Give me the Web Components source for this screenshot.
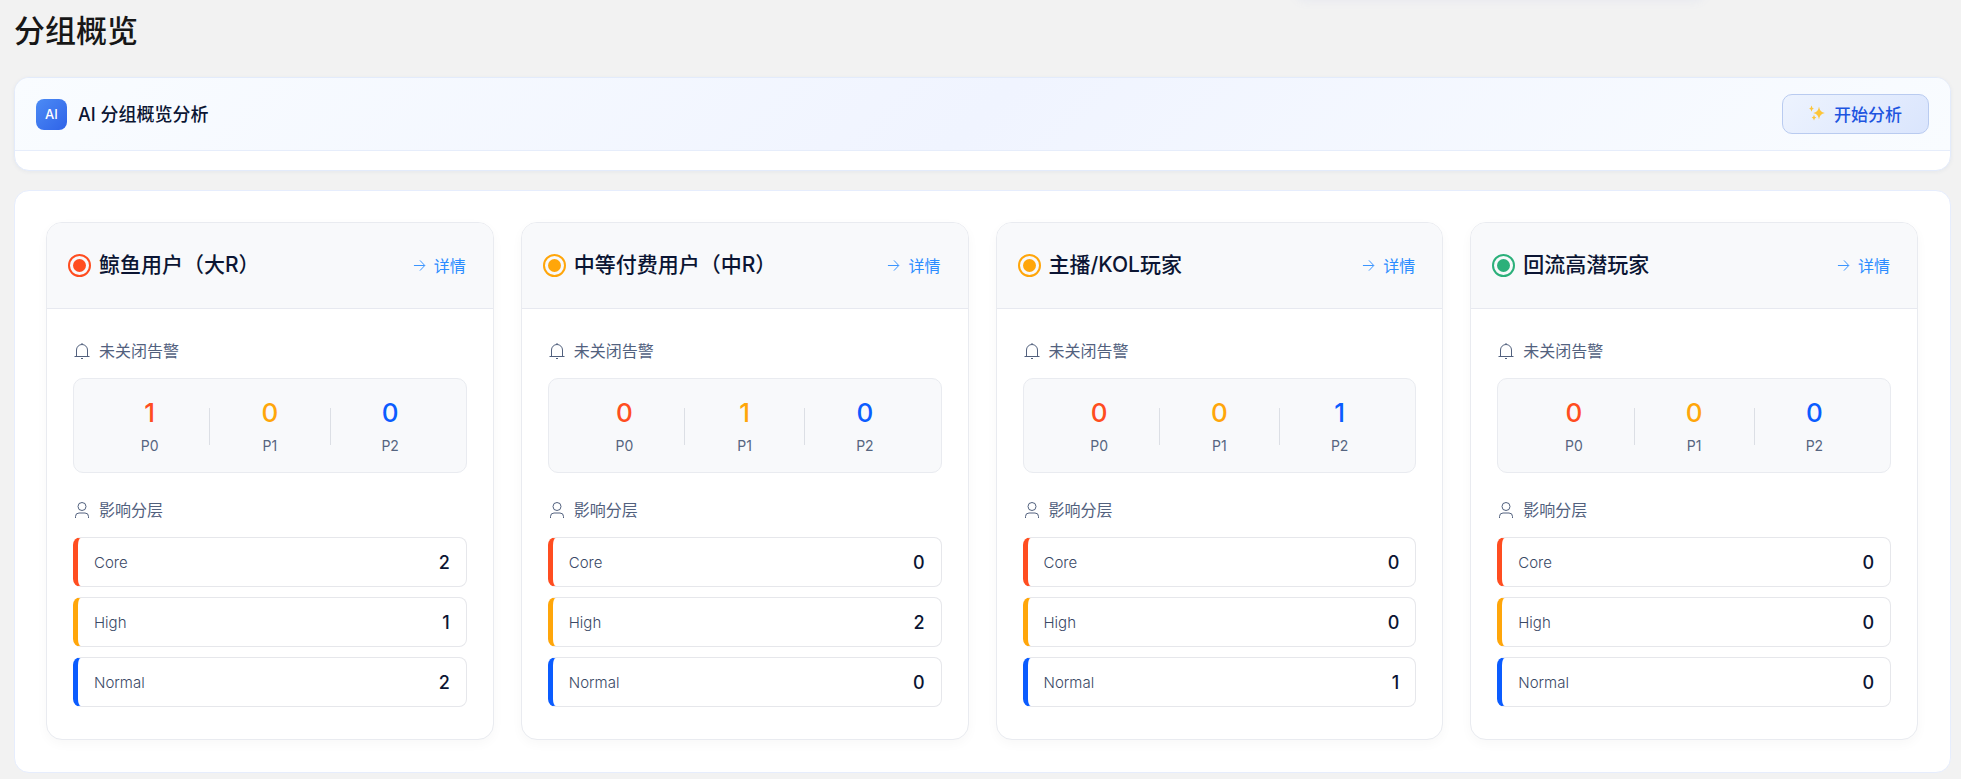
<!DOCTYPE html>
<html lang="zh-CN">
<head>
<meta charset="utf-8">
<meta name="viewport" content="width=device-width, initial-scale=1">
<title>分组概览</title>
<style>
  body {
    margin: 0;
    background: #f2f2f2;
    color: #0b1533;
    font-family: Inter, "Noto Sans CJK SC", sans-serif;
  }
</style>
</head>
<body>
<group-overview-page heading="分组概览">
  <ai-panel heading="AI 分组概览分析">开始分析</ai-panel>
  <group-board>
    <group-card level="p0" p0="1" p1="0" p2="0" core="2" high="1" normal="2">鲸鱼用户（大R）</group-card>
    <group-card level="p1" p0="0" p1="1" p2="0" core="0" high="2" normal="0">中等付费用户（中R）</group-card>
    <group-card level="p1" p0="0" p1="0" p2="1" core="0" high="0" normal="1">主播/KOL玩家</group-card>
    <group-card level="ok" p0="0" p1="0" p2="0" core="0" high="0" normal="0">回流高潜玩家</group-card>
  </group-board>
</group-overview-page>

<script>
// page shell
class GroupOverviewPage extends HTMLElement {
  constructor() {
    super();
    this.attachShadow({ mode: 'open' });
    this.shadowRoot.innerHTML = `
      <style>
        :host {
          display: block;
          padding: 9px 10px 6px 14px;
        }
        /* shadow of the floating bar that sits above the viewport */
        .bar-shadow {
          position: absolute;
          top: -40px;
          left: 66%;
          right: 13%;
          height: 40px;
          border-radius: 12px;
          box-shadow: 0 2px 8px #e9eaf0;
        }
        h1 {
          margin: 0 0 24px;
          color: #171717;
          font-size: 31px;
          line-height: 44px;
          font-weight: 500;
        }
        main {
          display: flex;
          flex-direction: column;
          gap: 19px;
        }
      </style>
      <div class="bar-shadow"></div>
      <h1></h1>
      <main><slot></slot></main>
    `;
    this.shadowRoot.querySelector('h1').textContent = this.getAttribute('heading');
  }
}

// AI analysis panel with the start button
class AiPanel extends HTMLElement {
  constructor() {
    super();
    this.attachShadow({ mode: 'open' });
    this.shadowRoot.innerHTML = `
      <style>
        :host {
          display: block;
          overflow: hidden;
          padding-bottom: 19px;
          border: 1px solid #e3ebfb;
          border-radius: 15px;
          background: #fff;
          box-shadow: 0 1px 4px rgba(30, 60, 120, 0.06);
        }
        header {
          display: flex;
          align-items: center;
          gap: 11px;
          padding: 16px 21px;
          border-bottom: 1px solid #e6edfb;
          background: linear-gradient(135deg, #f9fcff 0%, #f0f4ff 50%, #f9fcff 100%);
        }
        .badge {
          display: grid;
          place-items: center;
          width: 31px;
          height: 31px;
          border-radius: 8px;
          background: linear-gradient(135deg, #4c8bf5, #2f63e8);
          color: #fff;
          font-size: 13px;
          font-weight: 500;
        }
        h2 {
          flex: 1;
          margin: 0;
          font-size: 18px;
          line-height: 27px;
          font-weight: 500;
        }
        button {
          display: flex;
          align-items: center;
          gap: 9px;
          height: 40px;
          padding: 0 26px 2px;
          border: 1px solid #b9cbf0;
          border-radius: 10px;
          background: linear-gradient(135deg, #edf3fe, #dae5fd);
          color: #1d55e0;
          font: inherit;
          font-size: 17px;
          font-weight: 500;
        }
        svg {
          width: 16px;
          height: 16px;
        }
      </style>
      <header>
        <span class="badge">AI</span>
        <h2></h2>
        <button type="button">
          <svg viewBox="0 0 16 16" fill="#fcc53a" aria-hidden="true">
            <path d="M10 1.500Q10.700 7.300 15.800 8Q10.700 8.700 10 14.500Q9.300 8.700 4.200 8Q9.300 7.300 10 1.500Z"/>
            <path d="M2.500 0.500Q2.900 3.100 4.900 3.600Q2.900 4.100 2.500 6.700Q2.100 4.100 0.100 3.600Q2.100 3.100 2.500 0.500Z"/>
            <path d="M5 9.800Q5.400 12.200 7.300 12.600Q5.400 13 5 15.400Q4.600 13 2.700 12.600Q4.600 12.200 5 9.800Z"/>
          </svg>
          <slot></slot>
        </button>
      </header>
    `;
    this.shadowRoot.querySelector('h2').textContent = this.getAttribute('heading');
  }
}

// white board that lays the group cards out
class GroupBoard extends HTMLElement {
  constructor() {
    super();
    this.attachShadow({ mode: 'open' });
    this.shadowRoot.innerHTML = `
      <style>
        :host {
          display: grid;
          grid-template-columns: repeat(4, 1fr);
          gap: 27px;
          padding: 31px 32px 32px 31px;
          border: 1px solid #e6edfd;
          border-radius: 15px;
          background: #fff;
        }
      </style>
      <slot></slot>
    `;
  }
}

// one alert count, e.g. P0
class AlertCount extends HTMLElement {
  constructor() {
    super();
    this.attachShadow({ mode: 'open' });
    this.shadowRoot.innerHTML = `
      <style>
        :host {
          display: flex;
          flex: 1;
          flex-direction: column;
          align-items: center;
          gap: 5px;
        }
        .value {
          color: var(--tone);
          font-size: 26px;
          line-height: 35px;
          font-weight: 500;
        }
        .name {
          color: #566580;
          font-size: 14px;
          line-height: 22px;
        }
      </style>
      <span class="value"><slot></slot></span>
      <span class="name"></span>
    `;
    this.shadowRoot.querySelector('.name').textContent = this.getAttribute('name');
  }
}

// one row of the affected tiers
class TierRow extends HTMLElement {
  constructor() {
    super();
    this.attachShadow({ mode: 'open' });
    this.shadowRoot.innerHTML = `
      <style>
        :host {
          display: flex;
          align-items: center;
          justify-content: space-between;
          padding: 13px 16px 11px;
          border: 1px solid #e6e7eb;
          border-left: 5px solid var(--tone);
          border-radius: 8px;
          background: #fff;
          line-height: 24px;
        }
        .name {
          color: #3a4966;
          font-size: 15px;
          font-weight: 300;
        }
        .value {
          font-size: 18px;
          font-weight: 500;
        }
      </style>
      <span class="name"></span>
      <span class="value"><slot></slot></span>
    `;
    this.shadowRoot.querySelector('.name').textContent = this.getAttribute('name');
  }
}

class GroupCard extends HTMLElement {
  constructor() {
    super();
    this.attachShadow({ mode: 'open' });
    this.render();
  }
  render() {
    const get = (name) => this.getAttribute(name);
    this.shadowRoot.innerHTML = `
      <style>
        :host {
          --red: #ff4d20;
          --orange: #ffa60a;
          --blue: #0b5cff;
          --level: var(--red);
          display: block;
          min-width: 0;
          overflow: hidden;
          border: 1px solid #e9ebf0;
          border-radius: 16px;
          background: #fff;
          box-shadow: 0 4px 12px rgba(0, 0, 0, 0.03);
        }
        :host([level="p1"]) { --level: var(--orange); }
        :host([level="ok"]) { --level: #2bb07a; }
        header {
          display: flex;
          align-items: center;
          justify-content: space-between;
          padding: 26px 27px 27px 21px;
          border-bottom: 1px solid #e7e9f0;
          background: #f8f9fb;
        }
        h3 {
          display: flex;
          align-items: center;
          gap: 8px;
          margin: 0;
          font-size: 21px;
          line-height: 32px;
          font-weight: 500;
        }
        .dot {
          box-sizing: border-box;
          width: 23px;
          height: 23px;
          padding: 3px;
          border: 2px solid var(--level);
          border-radius: 50%;
          background: var(--level) content-box;
        }
        a {
          display: flex;
          align-items: center;
          gap: 8px;
          color: #2b8cff;
          font-size: 16px;
          text-decoration: none;
        }
        svg {
          width: 16px;
          height: 16px;
          fill: none;
          stroke: currentColor;
        }
        a svg {
          width: 13px;
          height: 13px;
        }
        section {
          display: flex;
          flex-direction: column;
          gap: 10px;
          padding: 0 26px;
        }
        section:first-of-type { padding-top: 30px; }
        section:last-of-type {
          padding-top: 25px;
          padding-bottom: 32px;
        }
        h4 {
          display: flex;
          align-items: center;
          gap: 9px;
          margin: 0 0 5px 1px;
          color: #52617e;
          font-size: 16px;
          line-height: 24px;
          font-weight: 400;
        }
        .alerts {
          display: flex;
          align-items: center;
          padding: 16px 16px 15px;
          border: 1px solid #e9ebf0;
          border-radius: 10px;
          background: #f8f9fb;
        }
        .divider {
          width: 1px;
          height: 37px;
          background: #dcdfe5;
        }
        .red { --tone: var(--red); }
        .orange { --tone: var(--orange); }
        .blue { --tone: var(--blue); }
      </style>
      <header>
        <h3><span class="dot"></span><span><slot></slot></span></h3>
        <a href="#">
          <svg viewBox="0 0 14 14" aria-hidden="true"><path d="M1 7h11.500M7.500 1.500L12.700 7L7.500 12.500"/></svg>
          <span>详情</span>
        </a>
      </header>
      <section>
        <h4>
          <svg viewBox="0 0 16 16" aria-hidden="true"><path d="M0.500 13.500h15M2.500 13.500V7a5.500 5.500 0 0 1 11 0V13.500M8 0v1.500M7 15.500h2"/></svg>
          <span>未关闭告警</span>
        </h4>
        <div class="alerts">
          <alert-count class="red" name="P0">${get('p0')}</alert-count>
          <span class="divider"></span>
          <alert-count class="orange" name="P1">${get('p1')}</alert-count>
          <span class="divider"></span>
          <alert-count class="blue" name="P2">${get('p2')}</alert-count>
        </div>
      </section>
      <section>
        <h4>
          <svg viewBox="0 0 16 16" aria-hidden="true"><circle cx="8" cy="4.500" r="4"/><path d="M1.500 16v-1.500a3.500 3.500 0 0 1 3.500-3.500h6a3.500 3.500 0 0 1 3.500 3.500V16"/></svg>
          <span>影响分层</span>
        </h4>
        <tier-row class="red" name="Core">${get('core')}</tier-row>
        <tier-row class="orange" name="High">${get('high')}</tier-row>
        <tier-row class="blue" name="Normal">${get('normal')}</tier-row>
      </section>
    `;
  }
}

customElements.define('alert-count', AlertCount);
customElements.define('tier-row', TierRow);
customElements.define('group-card', GroupCard);
customElements.define('group-board', GroupBoard);
customElements.define('ai-panel', AiPanel);
customElements.define('group-overview-page', GroupOverviewPage);
</script>
</body>
</html>
